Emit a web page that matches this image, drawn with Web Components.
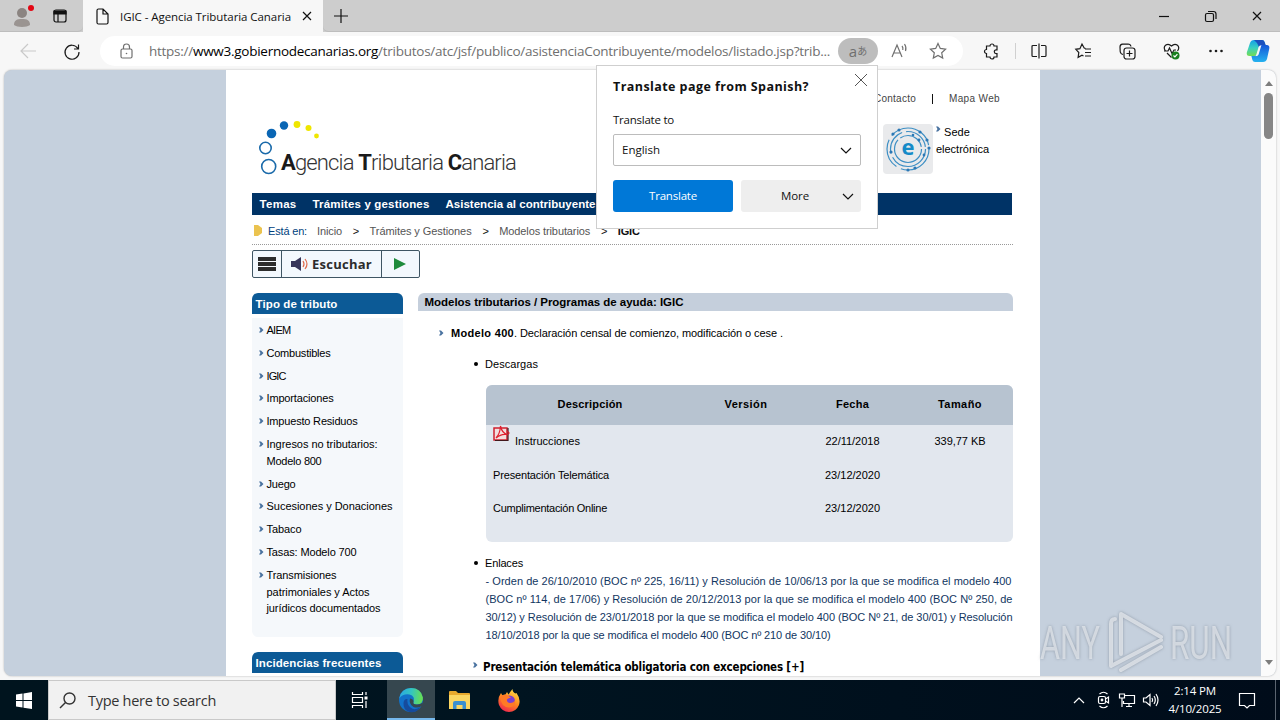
<!DOCTYPE html>
<html lang="es">
<head>
<meta charset="utf-8">
<title>IGIC - Agencia Tributaria Canaria</title>
<style>
  body {
    margin: 0;
    width: 1280px;
    height: 720px;
    overflow: hidden;
    background: #f7f7f7;
    font-family: "Open Sans", "Noto Sans", sans-serif;
  }
</style>
</head>
<body>
<desktop-screen></desktop-screen>

<script>
// small helper: every component only has static markup
function define(name, html, after) {
  customElements.define(name, class extends HTMLElement {
    constructor() {
      super();
      this.attachShadow({ mode: 'open' });
    }
    connectedCallback() {
      this.shadowRoot.innerHTML = typeof html === 'function' ? html(this) : html;
      if (after) after(this);
    }
  });
}

// TEXT: one line of text tracked to a given width ////////////////////////////
define('fit-text', `<style>
  :host { display: inline-block; width: max-content; white-space: nowrap; flex: none; }
</style><slot></slot>`, (el) => {
  const target = parseFloat(el.getAttribute('w'));
  if (!target) return;
  const natural = el.getBoundingClientRect().width;
  const count = el.textContent.length;
  el.style.letterSpacing = ((target - natural) / count).toFixed(4) + 'px';
});

// ICONS //////////////////////////////////////////////////////////////////////
const ICONS = {
  profile: `<g stroke="none"><circle cx="11" cy="8" r="5" fill="#8b8481"/><path d="M3 20c0-5 3-6 8-6s8 1 8 6c-3 2.500-13 2.500-16 0z" fill="#9a9491"/><circle cx="20" cy="3" r="3" fill="#e30613"/></g>`,
  panel: `<rect x="1" y="1" width="12" height="12" rx="2"/><path d="M1 2h12v3H1z" fill="currentColor"/><path d="M5 4v9"/>`,
  doc: `<path d="M1 2.500Q1 1 2.500 1H7l5 5v8.500Q12 16 10.500 16h-8Q1 16 1 14.500zM7 1v5h5"/>`,
  close: `<path d="M1 1l8 8M9 1L1 9"/>`,
  bigclose: `<path d="M1 1l12 12M13 1L1 13"/>`,
  plus: `<path d="M7 0v14M0 7h14"/>`,
  min: `<path d="M0 5.500h10"/>`,
  restore: `<rect x=".5" y="2.500" width="8" height="8" rx="1.500"/><path d="M3 .5h5.500q2.500 0 2.500 2.500v5"/>`,
  back: `<path d="M16 8H1M8 1L1 8l7 7"/>`,
  reload: `<path d="M14.800 5.300A7 7 0 1 0 16 9M15.500 1.500v4.500H11"/>`,
  lock: `<rect x="1" y="6" width="11" height="9" rx="1.500"/><path d="M3.500 6V4q0-3 3-3t3 3v2"/><circle cx="6.500" cy="10.500" r=".8" fill="currentColor" stroke="none"/>`,
  star: `<path d="M9 1.500l2.300 4.900 5.300.7-3.900 3.700 1 5.300L9 13.500l-4.700 2.600 1-5.300L1.400 7.100l5.300-.7z"/>`,
  puzzle: `<path d="M3.500 3H7a2 2 0 0 1 4 0h3v3.800h-.8a1.900 1.900 0 0 0 0 3.800H14V14h-3a2 2 0 0 1-4 0H3.500v-3.500a2 2 0 0 1 0-4z"/>`,
  split: `<path d="M6 2.500H2q-1 0-1 1v9q0 1 1 1h4M10 2.500h4q1 0 1 1v9q0 1-1 1h-4M8 .5v15"/>`,
  favs: `<path d="M10.500 5.500L9.200 5 7 1 4.900 5.700 .8 6.300l3 3.200-.7 4.800L7 12.200l1.500.8M10 6h6M10 9.500h6M10 13h6"/>`,
  collect: `<rect x="5" y="5" width="11" height="11" rx="2.500"/><path d="M10.500 7.500v6M7.500 10.500h6M4 11.500Q1.500 11 1.200 8.500L1 4Q1 1.500 3.500 1.200L9 1q2.500 0 3 2.500"/>`,
  health: `<path d="M2.500 8Q0 4.500 2.500 2.200 5.500 0 8.500 3 11.500 0 14.500 2.200q2.500 2.300 0 5.800M1 8h4l1.500-3 2.500 5.500L11 7h2M4 10l4.500 4.500"/><circle cx="12.500" cy="12.500" r="4" fill="#1a7f1f" stroke="none"/><path d="M10.500 12.500l1.400 1.400 2.500-2.800" stroke="#fff"/>`,
  dots: `<g fill="currentColor" stroke="none"><circle cx="1.500" cy="2" r="1.300"/><circle cx="7" cy="2" r="1.300"/><circle cx="12.500" cy="2" r="1.300"/></g>`,
  copilot: `<defs><linearGradient id="ca" x1="0" y1="0" x2="0" y2="1"><stop offset="0" stop-color="#13a0e8"/><stop offset=".5" stop-color="#3ad0c0"/><stop offset="1" stop-color="#74dd52"/></linearGradient><linearGradient id="cb" x1="0" y1="0" x2="0" y2="1"><stop offset="0" stop-color="#1457d8"/><stop offset="1" stop-color="#25b2ef"/></linearGradient></defs>
    <g stroke="none"><path d="M8 1h8q2 0 2.600 2l1 3h-4q-2 0-2.600 2l-2 7q-.7 2-2.700 2H3.500Q.3 17 .8 13.500L4 4Q5 1 8 1z" fill="url(#ca)"/><path d="M8 1h8q2 0 2.600 2l1 3h-4L13 8Q12 4 8 1z" fill="#1b50bd"/><path d="M17 23H9q-2 0-2.600-2l-1-4h3q2 0 2.600-2l2-7q.7-2 2.700-2h5q3.200 0 2.600 3.500L21 20q-1 3-4 3z" fill="url(#cb)"/><path d="M10.200 16l2.400-8q.7-1.800 2.800-1.800l-2.800 9.200q-.6 1.800-2.900 1.800z" fill="#f7f7f7"/></g>`,
  readaloud: `<path d="M1 14L6 2l5 12M2.800 10h6.400M11 3q1.300 1.500.8 4M13.500 1q2.200 3 1 7"/>`,
  chevron: `<path d="M1 1l5 5 5-5"/>`,
  chevup: `<path d="M1 6l5-5 5 5"/>`,
  bullet: `<path d="M0 .5h2L4.500 3 2 5.500H0L1.500 3z" fill="#4a73a0" stroke="none"/>`,
  crumb: `<path d="M0 0h4l4 3v5l-4 3H0z" fill="#ebc34f" stroke="none"/>`,
  burger: `<path d="M0 2h18M0 7h18M0 12h18" stroke-width="4" stroke="#2c2c2c"/>`,
  speaker: `<g stroke="none"><path d="M0 4h4l6-4v14l-6-4H0z" fill="#37355a"/></g><path d="M12 4q2 3 0 6M14 2q4 5 0 10" stroke="#e0694b"/>`,
  play: `<path d="M0 0l12 6L0 12z" fill="#1f8b3c" stroke="none"/>`,
  pdf: `<rect x="1" y="3" width="13" height="12" fill="#f3dede" stroke="#d0202f" stroke-width="1.500"/><path d="M3 13q4-4 4.500-12Q9 8 14 9.500 8 8.500 3 13" stroke="#e0202f"/><path d="M15 3v12.500H2" stroke="#42171b"/><path d="M14 6l2 2-2 2" stroke="#d0202f"/>`,
  windows: `<g fill="#fff" stroke="none"><path d="M0 2.400L6.500 1.500V8H0zM7.500 1.400L16 0v8H7.500zM0 9h6.500v6.500L0 14.600zM7.500 9H16v8l-8.500-1.300z"/></g>`,
  search: `<circle cx="9.500" cy="6.500" r="5.500"/><path d="M5.500 10.500L0 16"/>`,
  taskview: `<path d="M.5 0v2.500h10V0M.5 5.500h10v5H.5zM.5 16v-2.500h10V16M14 0v3M14 9v7"/><rect x="12.500" y="4.500" width="3" height="3" fill="#fff" stroke="none"/>`,
  edge: `<defs><linearGradient id="ea" x1="0" y1=".3" x2="1" y2="0.4"><stop offset="0" stop-color="#2aa7e3"/><stop offset=".5" stop-color="#34c5c0"/><stop offset="1" stop-color="#69e04f"/></linearGradient></defs><g stroke="none"><circle cx="12" cy="12" r="12" fill="#1271c9"/><path d="M.2 10.500Q2.200 0 12 0q10 0 11.900 9.500Q24.500 16 17.500 16.500q-4 0-3-2.500Q16.500 8 10.500 6.500 4 5.500.2 10.500z" fill="url(#ea)"/><path d="M8.500 11q-1 5 3 8.500t10-.5Q17 25.500 10.500 24 4 22 4.500 15q.5-4.500 4-4z" fill="#164b9c"/><path d="M11 10.500q-1.500 5.500 3.500 8.500 4 1.600 8.500-1 1-1 .8-3.500-3 2.500-6.300 2-4-.5-3-2.500.5-3-3.500-3.500z" fill="#36474f"/></g>`,
  folder: `<g stroke="none"><path d="M0 1q0-1 1-1h6l2 2h11q1 0 1 1v4H0z" fill="#e8a92d"/><path d="M0 4h21v14H0z" fill="#fbd662"/><path d="M4 18v-6q0-2 2-2h9q2 0 2 2v6h-3.500v-4h-6v4z" fill="#3a8fd0"/></g>`,
  firefox: `<defs><linearGradient id="fa" x1=".8" y1="0" x2=".3" y2="1"><stop offset="0" stop-color="#ffe14a"/><stop offset=".5" stop-color="#ff8a1f"/><stop offset="1" stop-color="#f0264f"/></linearGradient></defs><g stroke="none"><path d="M3 4l1.500 2.500 3-1L9 3l1.500 2.500Q12 3 14.500 0q0 3 3 4.500L18.500 4q4.500 6 2.500 12-3 7-10 7T1 16Q-1 9.500 3 4z" fill="url(#fa)"/><circle cx="11.500" cy="12" r="5.500" fill="#7b3fd0"/><path d="M2 8q4-4 8-1.500 2 1.200 3 2.500-3-.5-4 1.500-.5 3 3 3.500 4 0 5-3 .8 7-6 7.500Q3 18 2 8z" fill="#ff7a26"/></g>`,
  cam: `<rect x="1.500" y="5.500" width="7" height="7" rx="1.500"/><path d="M8.500 8l3-2v6l-3-2M2.500 3q4-3.500 8 0M2.500 15q4 3.500 8 0"/><circle cx="5" cy="9" r=".8" fill="currentColor"/>`,
  network: `<path d="M6 2.500h9.500v8H4.500V8M7 13.500h6M10 10.500v3M.5 1h5v4h-5zM3 5v9"/>`,
  sound: `<path d="M.5 5h2.500l4-3.500v11L3 9H.5zM9 5q1.300 2 0 4M11 3q2.600 4 0 8M13 1q4 6 0 12"/>`,
  notify: `<path d="M.5.500h15v12h-5L8 15l-2.500-2.500h-5z"/>`,
  sede: `<g stroke="#3d8fc4" stroke-width="1.200"><circle cx="25" cy="25" r="21" stroke-dasharray="40 5 30 5 47 5"/><circle cx="25" cy="25" r="17.500" stroke-dasharray="46 4 26 4 27 3"/><circle cx="25" cy="25" r="13.500" stroke-dasharray="52 3 27 3"/></g>
    <g fill="#2c78b5" stroke="none"><circle cx="16" cy="6" r="1.600"/><circle cx="10" cy="10" r="1.600"/><circle cx="37" cy="8" r="1.600"/><circle cx="44" cy="16" r="1.600"/><circle cx="36" cy="16" r="1.400"/><circle cx="46" cy="24" r="1.600"/><circle cx="8" cy="28" r="1.600"/><circle cx="41" cy="31" r="1.400"/><circle cx="25" cy="46" r="1.600"/><circle cx="32" cy="44" r="1.600"/><circle cx="30" cy="11" r="1.300"/></g>
    <text x="25" y="31" text-anchor="middle" font-family="Open Sans" font-weight="bold" font-size="22" fill="#168bc8" stroke="none">e</text>`,
  arc: `<g stroke="none" fill="#0a66b4"><circle cx="12.500" cy="12.500" r="4.800"/><circle cx="25" cy="4.500" r="4.200"/></g><g stroke="none" fill="#efe600"><circle cx="38" cy="3.500" r="3.400"/><circle cx="49.500" cy="7" r="3"/><circle cx="57.500" cy="15" r="2.400"/></g><g stroke="#1a6aaa" stroke-width="1.600"><circle cx="6.500" cy="27" r="5.700"/><circle cx="9.700" cy="45.500" r="7"/></g>`
};

define('ui-icon', (el) => {
  const w = el.getAttribute('w'), h = el.getAttribute('h') || w;
  return `<style>
    :host { display: block; flex: none; width: ${w}px; height: ${h}px; }
    svg { display: block; overflow: visible; fill: none; stroke: currentColor; stroke-width: var(--stroke, 1.200); }
  </style><svg width="${w}" height="${h}">${ICONS[el.getAttribute('name')]}</svg>`;
});

// BROWSER FRAME //////////////////////////////////////////////////////////////
define('tab-strip', `<style>
  :host { display: flex; height: 32px; background: #cdcdcd; color: #111; box-sizing: border-box; }
  .left { width: 83px; display: flex; align-items: center; gap: 18px; padding-left: 11px; box-sizing: border-box; box-shadow: inset 0 -1px #bdbdbd; border-bottom-right-radius: 5px; }
  .tab { width: 240px; display: flex; align-items: center; box-sizing: border-box; padding: 0 11px 0 13px; background: #f7f7f7; font-size: 11.500px; }
  .tab fit-text { margin-left: 11px; margin-right: auto; }
  .rest { flex: 1; display: flex; align-items: center; padding: 0 18px 0 11px; box-shadow: inset 0 -1px #bdbdbd; border-bottom-left-radius: 5px; }
  .min { margin-left: auto; margin-right: 36px; }
  .res { margin-right: 36px; }
</style>
<div class="left"><ui-icon name="profile" w="24" h="22"></ui-icon><ui-icon name="panel" w="14"></ui-icon></div>
<div class="tab"><ui-icon name="doc" w="13" h="17"></ui-icon><fit-text w="171">IGIC - Agencia Tributaria Canaria</fit-text><ui-icon name="close" w="10"></ui-icon></div>
<div class="rest"><ui-icon name="plus" w="14"></ui-icon>
  <ui-icon class="min" name="min" w="10"></ui-icon><ui-icon class="res" name="restore" w="11"></ui-icon><ui-icon name="close" w="10"></ui-icon></div>`);

define('tool-bar', `<style>
  :host { display: flex; align-items: center; height: 38px; background: #f7f7f7; color: #1b1b1b; box-sizing: border-box; padding-left: 20px; }
  .back { color: #c9c9c9; margin-right: 27px; }
  .url { display: flex; align-items: center; width: 863px; height: 30px; margin-left: 20px; border-radius: 15px; background: #fff; color: #6f6f6f; font-size: 13.500px; padding-left: 20px; box-sizing: border-box; }
  .url fit-text { margin-left: 16px; }
  b { font-weight: 400; color: #000; }
  .lang { width: 40px; height: 26px; margin: 0 13px 0 8px; border-radius: 13px; background: #bdbdbd; display: flex; align-items: center; justify-content: center; font: 15px/20px "Open Sans", "Noto Sans CJK JP", sans-serif; }
  .lang small { font-size: 10px; }
  .read { margin-right: 21px; }
  .tools { flex: 1; display: flex; align-items: center; padding-left: 20px; }
  i { width: 1px; height: 16px; background: #d0d0d0; margin: 0 15px 0 16px; }
</style>
<ui-icon class="back" name="back" w="16"></ui-icon><ui-icon name="reload" w="17"></ui-icon>
<div class="url"><ui-icon name="lock" w="13" h="16"></ui-icon>
  <fit-text w="681">https://<b>www3.gobiernodecanarias.org</b>/tributos/atc/jsf/publico/asistenciaContribuyente/modelos/listado.jsp?trib...</fit-text>
  <div class="lang">a<small>あ</small></div>
  <ui-icon class="read" name="readaloud" w="17" h="16"></ui-icon><ui-icon name="star" w="18"></ui-icon></div>
<div class="tools">
  <ui-icon name="puzzle" w="16" h="17"></ui-icon><i></i>
  <ui-icon name="split" w="16"></ui-icon>
  <ui-icon name="favs" w="17" h="16" style="margin-left:28px"></ui-icon>
  <ui-icon name="collect" w="17" style="margin-left:27px"></ui-icon>
  <ui-icon name="health" w="17" style="margin-left:27px"></ui-icon>
  <ui-icon name="dots" w="14" h="4" style="margin-left:29px"></ui-icon>
  <ui-icon name="copilot" w="24" style="margin-left:23px"></ui-icon>
</div>`);

define('scroll-bar', `<style>
  :host { display: flex; flex-direction: column; align-items: center; width: 15px; background: #fbfbfb; box-sizing: border-box; padding: 11px 0; }
  .thumb { width: 9px; height: 46px; margin-top: 7px; border-radius: 5px; background: #868686; }
  .up, .down { border: 4px solid transparent; border-top: 0; border-bottom: 5px solid #7d7d7d; }
  .down { margin-top: auto; transform: rotate(180deg); }
</style><div class="up"></div><div class="thumb"></div><div class="down"></div>`);

define('translate-popup', `<style>
  :host { display: flex; flex-direction: column; box-sizing: border-box; width: 282px; height: 164px; padding: 12px 16px 16px; background: #fff; border: 1px solid #cfcfcf; color: #111; font-size: 11.500px; line-height: 18px; }
  .top { display: flex; justify-content: space-between; font-weight: 700; font-size: 12.500px; }
  .top ui-icon { margin: -5px -7px 0 0; color: #555; --stroke: 1; }
  .label { margin: 15px 0 5px; }
  .select { display: flex; align-items: center; justify-content: space-between; height: 32px; box-sizing: border-box; border: 1px solid #bcbcbc; border-radius: 2px; padding: 0 8px; }
  .buttons { display: flex; gap: 8px; margin-top: 14px; }
  .btn { width: 120px; box-sizing: border-box; height: 32px; display: flex; align-items: center; justify-content: center; border-radius: 3px; background: #0078d7; color: #fff; }
  .more { background: #eee; color: #111; padding-left: 31px; gap: 33px; }
</style>
<div class="top"><fit-text w="196">Translate page from Spanish?</fit-text><ui-icon name="bigclose" w="14"></ui-icon></div>
<div class="label"><fit-text w="61">Translate to</fit-text></div>
<div class="select"><fit-text w="38">English</fit-text><ui-icon name="chevron" w="12" h="7"></ui-icon></div>
<div class="buttons"><div class="btn"><fit-text w="48">Translate</fit-text></div>
  <div class="btn more"><fit-text w="28">More</fit-text><ui-icon name="chevron" w="10" h="6"></ui-icon></div></div>`);

// SITE ///////////////////////////////////////////////////////////////////////
define('site-header', `<style>
  :host { display: block; height: 123px; }
  .links { display: flex; justify-content: flex-end; gap: 16px; padding: 21px 12px 0 0; font-size: 10px; line-height: 16px; color: #444; }
  .links i { width: 1px; height: 10px; margin-top: 3px; background: #111; }
  .row { display: flex; justify-content: space-between; padding: 13px 0 0 7px; }
  .logo { display: flex; align-items: flex-start; margin-top: 1px; font: 300 22px/26px Roboto, sans-serif; color: #333; }
  .logo fit-text { margin: 29px 0 0 -38px; }
  .logo b { font-weight: 700; color: #1a1a1a; }
  .sede { display: flex; gap: 3px; width: 129px; font-size: 11px; line-height: 17px; color: #000; margin-top: 4px; }
  .sede .box { width: 50px; height: 50px; background: #e9eaec; border-radius: 4px; }
  .sede div div { display: flex; gap: 4px; }
  .sede ui-icon[name=bullet] { margin-top: 2px; }
</style>
<div class="links"><fit-text w="42">Contacto</fit-text><i></i><fit-text w="51">Mapa Web</fit-text></div>
<div class="row">
  <div class="logo"><ui-icon name="arc" w="60" h="54"></ui-icon><fit-text w="235"><b>A</b>gencia <b>T</b>ributaria <b>C</b>anaria</fit-text></div>
  <div class="sede"><ui-icon class="box" name="sede" w="50"></ui-icon>
    <div><div><ui-icon name="bullet" w="4" h="6"></ui-icon><fit-text w="26">Sede</fit-text></div><fit-text w="53">electrónica</fit-text></div></div>
</div>`);

define('site-nav', `<style>
  :host { display: flex; gap: 16px; height: 22px; line-height: 22px; padding-left: 7.500px; background: #003366; color: #fff; font-size: 11.500px; font-weight: 700; }
</style><fit-text w="37">Temas</fit-text><fit-text w="117">Trámites y gestiones</fit-text><fit-text w="150">Asistencia al contribuyente</fit-text>`);

define('bread-crumb', `<style>
  :host { display: flex; align-items: center; width: 761px; height: 30px; box-sizing: border-box; padding: 3px 0 1px 2px; border-bottom: 1px dotted #999; font-size: 11px; color: #555; }
  fit-text { margin-right: 10.800px; }
  .gt, b { color: #111; }
</style>
<ui-icon name="crumb" w="8" h="11"></ui-icon>
<fit-text w="39" style="color:#003f7d;margin:0 10px 0 6px">Está en:</fit-text><fit-text w="25">Inicio</fit-text><fit-text class="gt" w="6">&gt;</fit-text><fit-text w="102">Trámites y Gestiones</fit-text><fit-text class="gt" w="6">&gt;</fit-text><fit-text w="91">Modelos tributarios</fit-text><fit-text class="gt" w="6">&gt;</fit-text><fit-text w="22"><b>IGIC</b></fit-text>`);

define('listen-bar', `<style>
  :host { display: flex; width: 168px; height: 28px; margin-top: 5px; box-sizing: border-box; border: 1px solid #3f5563; border-radius: 2px; background: #f3f8fd; color: #2c2c2c; font: 700 13px "Open Sans", sans-serif; }
  div { display: flex; align-items: center; justify-content: center; box-sizing: border-box; }
  .a { width: 28px; } .b { width: 101px; gap: 4px; border: solid #3f5563; border-width: 0 1px; } .c { flex: 1; padding-right: 1px; }
</style>
<div class="a"><ui-icon name="burger" w="18" h="14"></ui-icon></div>
<div class="b"><ui-icon name="speaker" w="17" h="14"></ui-icon><fit-text w="60">Escuchar</fit-text></div>
<div class="c"><ui-icon name="play" w="12"></ui-icon></div>`);

// each item is a list of [text, width] lines
const TAXES = [
  [['AIEM', 24]],
  [['Combustibles', 64]],
  [['IGIC', 19]],
  [['Importaciones', 67]],
  [['Impuesto Residuos', 91]],
  [['Ingresos no tributarios:', 111], ['Modelo 800', 55]],
  [['Juego', 29]],
  [['Sucesiones y Donaciones', 126]],
  [['Tabaco', 35]],
  [['Tasas: Modelo 700', 90]],
  [['Transmisiones', 70], ['patrimoniales y Actos', 103], ['jurídicos documentados', 114]]
];

define('side-menu', () => `<style>
  :host { display: block; flex: none; width: 151px; font-size: 11px; line-height: 16.800px; color: #000; }
  h2 { margin: 0; height: 21px; box-sizing: border-box; padding-left: 3.500px; border-radius: 6px 6px 0 0; background: #0c5a96; color: #fff; font-size: 11.500px; line-height: 22px; }
  ul { margin: 4px 0 15px; height: 319px; box-sizing: border-box; padding: 4px 0 0 7px; list-style: none; background: #f5f8fb; border-radius: 0 0 6px 6px; }
  li { display: flex; gap: 2.500px; margin-bottom: 6px; }
  li > ui-icon { margin-top: 5px; }
  li fit-text { display: block; }
</style>
<h2><fit-text w="82">Tipo de tributo</fit-text></h2>
<ul>${TAXES.map((lines) => `<li><ui-icon name="bullet" w="5" h="6"></ui-icon><div>${lines.map((l) => `<fit-text w="${l[1]}">${l[0]}</fit-text>`).join('')}</div></li>`).join('')}</ul>
<h2><fit-text w="126">Incidencias frecuentes</fit-text></h2>`);

define('downloads-table', `<style>
  :host { display: grid; grid-template-columns: 208px 104px 109px 106px; grid-template-rows: 40px 34px 33px 50px; width: 527px; margin: 12px 0 12px; border-radius: 6px; overflow: hidden; background: #e2e7ee; line-height: 18px; }
  div { display: flex; justify-content: center; }
  .h { background: #b7c3d0; font-weight: 700; align-items: center; padding-bottom: 2px; height: 38px; }
  .t { justify-content: flex-start; padding-left: 7px; gap: 5px; }
  .d { padding-top: 7px; }
  ui-icon { margin-top: -7px; }
</style>
<div class="h"><fit-text w="65">Descripción</fit-text></div><div class="h"><fit-text w="43">Versión</fit-text></div><div class="h"><fit-text w="33">Fecha</fit-text></div><div class="h"><fit-text w="44">Tamaño</fit-text></div>
<div class="t d"><ui-icon name="pdf" w="17" h="17"></ui-icon><fit-text w="65">Instrucciones</fit-text></div><div></div><div class="d"><fit-text w="54">22/11/2018</fit-text></div><div class="d"><fit-text w="51">339,77 KB</fit-text></div>
<div class="t d"><fit-text w="116">Presentación Telemática</fit-text></div><div></div><div class="d"><fit-text w="55">23/12/2020</fit-text></div><div></div>
<div class="t d"><fit-text w="114">Cumplimentación Online</fit-text></div><div></div><div class="d"><fit-text w="55">23/12/2020</fit-text></div><div></div>`);

define('site-main', `<style>
  :host { display: block; flex: none; width: 595px; font-size: 11px; line-height: 18px; color: #000; }
  h1 { margin: 0; height: 18px; padding-left: 6.500px; border-radius: 6px 6px 0 0; background: #c5cfdc; font-size: 11.500px; }
  .model { display: flex; align-items: center; gap: 7px; margin-top: 13px; padding-left: 21px; }
  .body { padding-left: 68px; }
  .dot { display: flex; align-items: center; gap: 7px; margin-left: -13px; }
  .dot::before { content: ""; width: 4px; height: 4px; margin-left: 1px; border-radius: 50%; background: #000; }
  .law { display: flex; flex-direction: column; color: #12365f; margin-left: -.5px; }
  .more { display: flex; gap: 6px; margin: 14px 0 0 -13px; font: 700 11.500px/18px "DejaVu Sans Condensed", "DejaVu Sans", sans-serif; }
  .more ui-icon { margin-top: 4px; }
</style>
<h1><fit-text w="259">Modelos tributarios / Programas de ayuda: IGIC</fit-text></h1>
<div class="model"><ui-icon name="bullet" w="5" h="6"></ui-icon><div><fit-text w="63"><b>Modelo 400</b></fit-text><fit-text w="269">. Declaración censal de comienzo, modificación o cese .</fit-text></div></div>
<div class="body">
  <div class="dot" style="margin-top:13px"><fit-text w="53">Descargas</fit-text></div>
  <downloads-table></downloads-table>
  <div class="dot"><fit-text w="38">Enlaces</fit-text></div>
  <div class="law">
    <fit-text w="526">- Orden de 26/10/2010 (BOC nº 225, 16/11) y Resolución de 10/06/13 por la que se modifica el modelo 400</fit-text>
    <fit-text w="527">(BOC nº 114, de 17/06) y Resolución de 20/12/2013 por la que se modifica el modelo 400 (BOC Nº 250, de</fit-text>
    <fit-text w="527">30/12) y Resolución de 23/01/2018 por la que se modifica el modelo 400 (BOC Nº 21, de 30/01) y Resolución</fit-text>
    <fit-text w="345">18/10/2018 por la que se modifica el modelo 400 (BOC nº 210 de 30/10)</fit-text>
  </div>
  <div class="more"><ui-icon name="bullet" w="4" h="6"></ui-icon><fit-text w="321">Presentación telemática obligatoria con excepciones [+]</fit-text></div>
</div>`);

define('web-site', `<style>
  :host { display: flex; width: 814px; box-sizing: border-box; padding: 0 0 0 26px; margin-left: 222px; background: #fff; font-family: "Liberation Sans", Arial, sans-serif; }
  .page { width: 760px; }
  .cols { display: flex; gap: 15px; margin-top: 15px; }
</style>
<div class="page"><site-header></site-header><site-nav></site-nav><bread-crumb></bread-crumb><listen-bar></listen-bar>
<div class="cols"><side-menu></side-menu><site-main></site-main></div></div>`);

// WATERMARK //////////////////////////////////////////////////////////////////
define('any-mark', `<style>
  :host { display: block; }
  svg { display: block; filter: drop-shadow(0 0 1.500px rgba(90,100,115,.6)); }
</style>
<svg width="216" height="68" font-family="Roboto" font-size="47" fill="#e3e7ec" fill-opacity=".75" stroke="none">
  <text x="1" y="51" textLength="60" lengthAdjust="spacingAndGlyphs">ANY</text>
  <text x="131" y="51" textLength="62" lengthAdjust="spacingAndGlyphs">RUN</text>
  <g fill="none" stroke="#e3e7ec" stroke-opacity=".8" stroke-width="4" stroke-linejoin="round" stroke-linecap="round">
    <path d="M82 46V6l40 23M76 11q-4 0-4 5v42l50-26M82 62l40-23"/>
  </g>
</svg>`);

// TASKBAR ////////////////////////////////////////////////////////////////////
define('task-bar', `<style>
  :host { display: flex; height: 40px; background: linear-gradient(90deg, #00141e, #001420 40%, #000c1a); color: #fff; }
  .c { display: flex; align-items: center; justify-content: center; width: 48px; }
  .search { width: 288px; box-sizing: border-box; border: 1px solid #c9c9c9; background: #f1f1f1; color: #333; gap: 12px; justify-content: flex-start; padding-left: 11px; font-size: 14.500px; }
  .on { background: #36474f; box-shadow: inset 0 -2px #76b9ed; }
  .tray { flex: 1; display: flex; align-items: center; justify-content: flex-end; }
  .clock { width: 54px; display: flex; flex-direction: column; align-items: center; font-size: 11.500px; line-height: 18px; margin: 0 17px 0 8px; }
  .end { width: 4px; height: 40px; margin-left: 20px; border-left: 1px solid #5a6470; }
</style>
<div class="c"><ui-icon name="windows" w="16" h="17"></ui-icon></div>
<div class="c search"><ui-icon name="search" w="16" h="16" style="--stroke:1.400"></ui-icon><fit-text w="128">Type here to search</fit-text></div>
<div class="c"><ui-icon name="taskview" w="16"></ui-icon></div>
<div class="c on" style="margin-left:3px"><ui-icon name="edge" w="24"></ui-icon></div>
<div class="c"><ui-icon name="folder" w="21" h="18"></ui-icon></div>
<div class="c" style="margin-left:2px"><ui-icon name="firefox" w="22" h="23"></ui-icon></div>
<div class="tray">
  <ui-icon name="chevup" w="12" h="7" style="margin-right:12px"></ui-icon>
  <ui-icon name="cam" w="13" h="18" style="margin-right:9px"></ui-icon>
  <ui-icon name="network" w="16" h="15" style="margin-right:8px"></ui-icon>
  <ui-icon name="sound" w="17" h="14"></ui-icon>
  <div class="clock"><fit-text w="42">2:14 PM</fit-text><fit-text w="53">4/10/2025</fit-text></div>
  <ui-icon name="notify" w="16" h="15"></ui-icon><div class="end"></div>
</div>`);

define('desktop-screen', `<style>
  :host { display: flex; flex-direction: column; width: 1280px; height: 720px; position: relative; overflow: hidden; }
  .view { display: flex; height: 606px; margin: 0 4px 4px; border-radius: 8px; overflow: hidden; background: #c5d0dd; box-shadow: 0 0 2px rgba(0,0,0,.3); }
  scroll-bar { margin-left: auto; }
  web-site { height: 606px; }
  translate-popup { position: absolute; left: 596px; top: 65px; }
  any-mark { position: absolute; left: 1039px; top: 608px; }
</style>
<tab-strip></tab-strip><tool-bar></tool-bar>
<div class="view"><web-site></web-site><scroll-bar></scroll-bar></div>
<task-bar></task-bar>
<translate-popup></translate-popup><any-mark></any-mark>`);
</script>
</body>
</html>
